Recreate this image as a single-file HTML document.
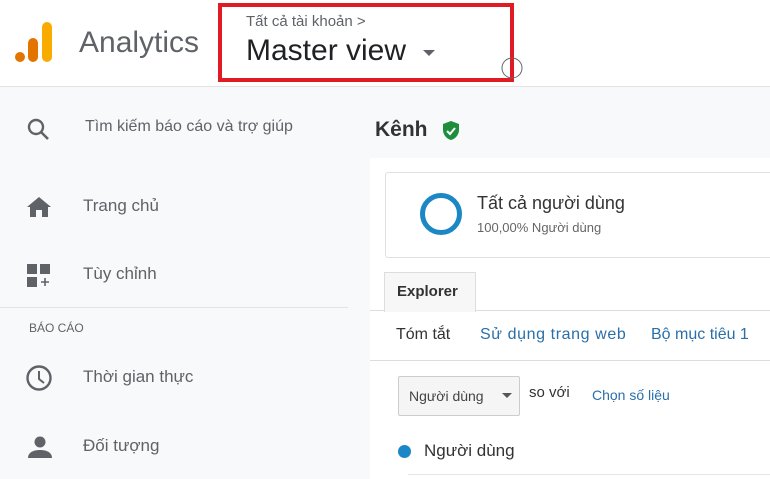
<!DOCTYPE html><html><head><meta charset="utf-8"><style>
body{margin:0;width:770px;height:479px;overflow:hidden;background:#f8f9fa;font-family:"Liberation Sans","DejaVu Sans",sans-serif;position:relative}
.a{position:absolute;white-space:nowrap}
.s{color:#5f6368;font-size:17px}
</style></head><body>
<div class="a" style="left:0;top:0;width:770px;height:86px;background:#fff;border-bottom:1px solid #e3e3e3"></div>
<svg class="a" style="left:15px;top:22px" width="40" height="42"><circle cx="5" cy="35" r="5" fill="#e37400"/><rect x="13" y="16" width="10" height="24" rx="5" fill="#e37400"/><rect x="27" y="0" width="10" height="40" rx="5" fill="#f9ab00"/></svg>
<div class="a" style="left:79px;top:26px;font-size:30px;color:#5f6368">Analytics</div>
<div class="a" style="left:218px;top:3px;width:288px;height:71px;border:4px solid #e01b24"></div>
<div class="a" style="left:246px;top:13px;font-size:15px;color:#5f6368">Tất cả tài khoản &gt;</div>
<div class="a" style="left:246px;top:34px;font-size:30px;color:#202124">Master view</div>
<svg class="a" style="left:422px;top:49px" width="14" height="8"><path d="M1 1h12L7 7z" fill="#5f6368"/></svg>
<svg class="a" style="left:500px;top:56px" width="24" height="24"><circle cx="12" cy="12" r="10" fill="none" stroke="#666" stroke-width="1"/></svg>
<svg class="a" style="left:26px;top:117px" width="26" height="26"><circle cx="10" cy="10" r="7" fill="none" stroke="#5f6368" stroke-width="2.4"/><path d="M15 15l7 7" stroke="#5f6368" stroke-width="2.6"/></svg>
<div class="a" style="left:85px;top:118px;width:215px;overflow:hidden;font-size:16px;color:#5f6368">Tìm kiếm báo cáo và trợ giúp</div>
<svg class="a" style="left:26px;top:196px" width="26" height="22"><path d="M13 1L1 11h3v10h6v-7h6v7h6V11h3z" fill="#5f6368"/></svg>
<div class="a s" style="left:83px;top:196px">Trang chủ</div>
<svg class="a" style="left:26px;top:263px" width="26" height="26"><rect x="1" y="1" width="10" height="10" fill="#5f6368"/><rect x="14" y="1" width="10" height="10" fill="#5f6368"/><rect x="1" y="14" width="10" height="10" fill="#5f6368"/><path d="M19 15v8M15 19h8" stroke="#5f6368" stroke-width="1.6"/></svg>
<div class="a s" style="left:83px;top:264px">Tùy chỉnh</div>
<div class="a" style="left:0;top:307px;width:348px;height:1px;background:#e3e3e3"></div>
<div class="a" style="left:29px;top:321px;font-size:12px;color:#5f6368">BÁO CÁO</div>
<svg class="a" style="left:25px;top:364px" width="28" height="28"><circle cx="14" cy="14" r="11.5" fill="none" stroke="#5f6368" stroke-width="2.4"/><path d="M14 7v8l5 4" fill="none" stroke="#5f6368" stroke-width="2"/></svg>
<div class="a s" style="left:83px;top:367px">Thời gian thực</div>
<svg class="a" style="left:27px;top:434px" width="26" height="26"><circle cx="13" cy="8" r="5.5" fill="#5f6368"/><path d="M1 24c0-6 6-8 12-8s12 2 12 8z" fill="#5f6368"/></svg>
<div class="a s" style="left:83px;top:436px">Đối tượng</div>
<div class="a" style="left:375px;top:118px;font-size:21px;font-weight:bold;color:#333">Kênh</div>
<svg class="a" style="left:441px;top:120px" width="20" height="22"><path d="M10 1L2 4v6c0 5 4 9 8 10 4-1 8-5 8-10V4z" fill="#1e8e3e"/><path d="M6 11l3 3 5-6" fill="none" stroke="#fff" stroke-width="2"/></svg>
<div class="a" style="left:370px;top:158px;width:400px;height:321px;background:#fff"></div>
<div class="a" style="left:385px;top:172px;width:390px;height:84px;border:1px solid #e0e0e0;border-radius:3px"></div>
<svg class="a" style="left:418px;top:191px" width="46" height="46"><circle cx="23" cy="23" r="18.5" fill="none" stroke="#1b87c5" stroke-width="5"/></svg>
<div class="a" style="left:477px;top:193px;font-size:18px;color:#333">Tất cả người dùng</div>
<div class="a" style="left:477px;top:220px;font-size:13px;color:#666">100,00% Người dùng</div>
<div class="a" style="left:370px;top:310px;width:400px;height:1px;background:#ddd"></div>
<div class="a" style="left:384px;top:272px;width:90px;height:39px;background:#f7f7f7;border:1px solid #ddd;border-bottom:none"></div>
<div class="a" style="left:397px;top:283px;font-size:15px;font-weight:bold;color:#333">Explorer</div>
<div class="a" style="left:396px;top:326px;font-size:16px;color:#333">Tóm tắt</div>
<div class="a" style="left:480px;top:326px;font-size:16px;letter-spacing:0.6px;color:#2a6fa8">Sử dụng trang web</div>
<div class="a" style="left:651px;top:326px;font-size:16px;color:#2a6fa8">Bộ mục tiêu 1</div>
<div class="a" style="left:370px;top:360px;width:400px;height:1px;background:#ddd"></div>
<div class="a" style="left:398px;top:376px;width:122px;height:40px;background:#f5f5f5;border:1px solid #ccc;border-radius:2px;box-sizing:border-box"></div>
<div class="a" style="left:409px;top:388px;font-size:14px;color:#444">Người dùng</div>
<svg class="a" style="left:502px;top:393px" width="10" height="6"><path d="M0 0h10L5 5z" fill="#555"/></svg>
<div class="a" style="left:529px;top:384px;font-size:15px;color:#333">so với</div>
<div class="a" style="left:592px;top:387px;font-size:14px;color:#2a6fa8">Chọn số liệu</div>
<div class="a" style="left:398px;top:445px;width:13px;height:13px;border-radius:50%;background:#1b87c5"></div>
<div class="a" style="left:424px;top:441px;font-size:17px;color:#333">Người dùng</div>
<div class="a" style="left:408px;top:474px;width:362px;height:1px;background:#e5e5e5"></div>
</body></html>
